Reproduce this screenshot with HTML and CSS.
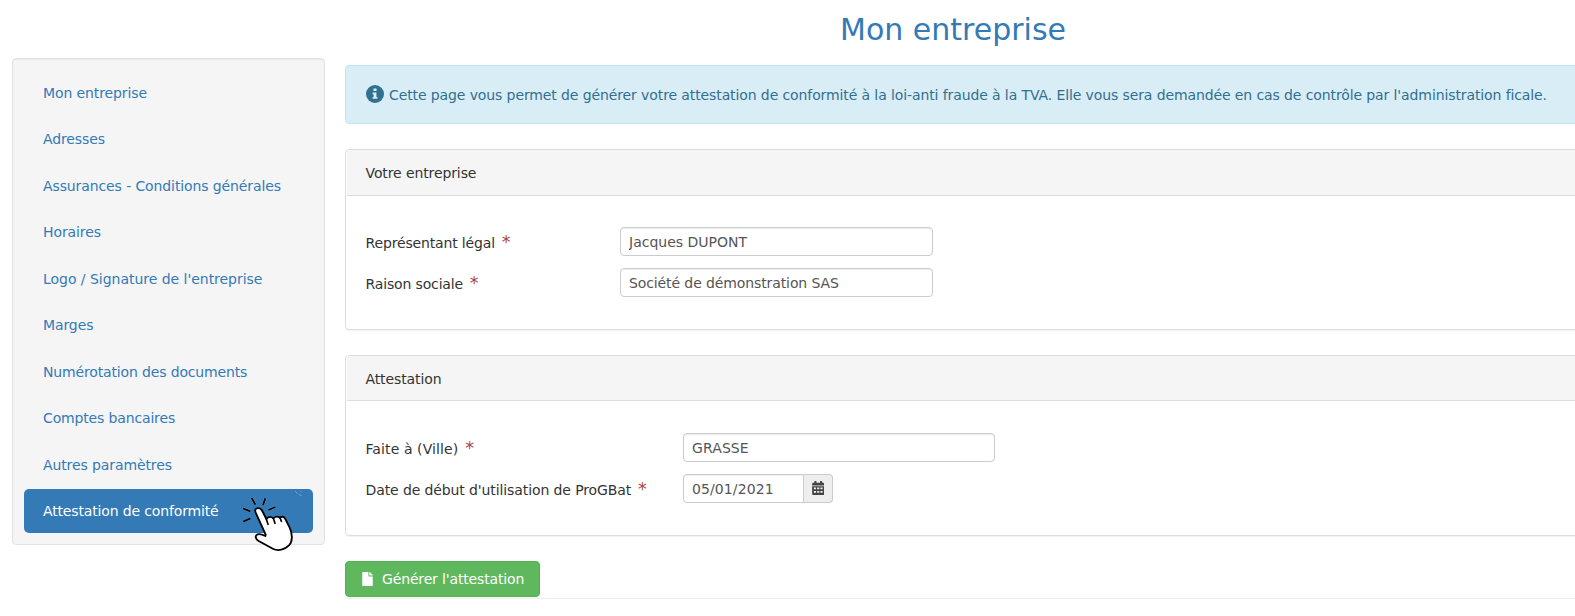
FILE: index.html
```html
<!DOCTYPE html>
<html lang="fr">
<head>
<meta charset="utf-8">
<title>Mon entreprise</title>
<link rel="stylesheet" href="styles.css">
</head>
<body>
<div class="page">
  <aside class="sidebar">
    <ul class="nav">
      <li><a class="nav-link">Mon entreprise</a></li>
      <li><a class="nav-link">Adresses</a></li>
      <li><a class="nav-link">Assurances - Conditions générales</a></li>
      <li><a class="nav-link">Horaires</a></li>
      <li><a class="nav-link loose">Logo / Signature de l'entreprise</a></li>
      <li><a class="nav-link">Marges</a></li>
      <li><a class="nav-link tight">Numérotation des documents</a></li>
      <li><a class="nav-link tight">Comptes bancaires</a></li>
      <li><a class="nav-link">Autres paramètres</a></li>
      <li><a class="nav-link tight active">Attestation de conformité</a></li>
    </ul>
    <svg class="pointer" viewBox="0 0 300 240">
      <g fill="none" stroke="#fff" stroke-opacity=".45" stroke-width="2" stroke-linecap="round"><path d="M196 34l6 6M207 44l7 2M213 35h1"/></g>
      <g fill="none" stroke="#fff" stroke-opacity=".3" stroke-width="8"><path d="M65 54L76 74M106 55L99 75M39 85L61 94M115 90L136 81M40 125L61 115"/></g>
      <g fill="none" stroke="#000" stroke-width="5.500" stroke-linecap="butt"><path d="M65 54L76 74M106 55L99 75M39 85L61 94M115 90L136 81M40 125L61 115"/></g>
      <path d="M77 98C73 89 78 85 84 84.500C91 84 94 87 97 93L109 117C115 110 123 109 130 115C138 108 145 109 150 113C158 107 163 111 167 119L179 143C189 164 187 187 177 196C164 209 145 214 130 207L86 183C76 177 74 166 83 163C91 161 96 163 106 168L107 164Z" fill="#fff" stroke="#000" stroke-width="5.500" stroke-linejoin="round"/>
      <path d="M109 117L114 133M130 115L135 130M150 113L154 124" fill="none" stroke="#000" stroke-width="5" stroke-linecap="round"/>
    </svg>
  </aside>
  <main class="content">
    <h1 class="title">Mon entreprise</h1>
    <div class="section">
      <div class="alert">
        <svg class="info" viewBox="0 0 18 18"><circle cx="9" cy="9" r="9" fill="#31708f"/><path d="M7.500 3.500h3v2.600h-3zM6.600 7.500h3.800v4.500h1v1.800H6.600V12h1V9.200h-1z" fill="#d9edf7"/></svg>
        <span>Cette page vous permet de générer votre attestation de conformité à la loi-anti fraude à la TVA. Elle vous sera demandée en cas de contrôle par l'administration ficale.</span>
      </div>
      <section class="panel">
        <header class="panel-heading">Votre entreprise</header>
        <div class="panel-body company">
          <label class="tight">Représentant légal <span class="required">*</span></label>
          <input class="field even" type="text" value="Jacques DUPONT">
          <label class="tight">Raison sociale <span class="required">*</span></label>
          <input class="field" type="text" value="Société de démonstration SAS">
        </div>
      </section>
      <section class="panel">
        <header class="panel-heading short">Attestation</header>
        <div class="panel-body certificate">
          <label class="wide">Faite à (Ville) <span class="required">*</span></label>
          <input class="field wide" type="text" value="GRASSE">
          <label>Date de début d'utilisation de ProGBat <span class="required">*</span></label>
          <div class="date-group">
            <input class="field date wide" type="text" value="05/01/2021">
            <span class="addon"><svg class="calendar" viewBox="0 0 448 512"><path fill="#444" fill-rule="evenodd" d="M96 0h48a16 16 0 0 1 16 16v48h128V16a16 16 0 0 1 16-16h48a16 16 0 0 1 16 16v48h32a48 48 0 0 1 48 48v48H0v-48a48 48 0 0 1 48-48h32V16A16 16 0 0 1 96 0zM0 192h448v272a48 48 0 0 1-48 48H48a48 48 0 0 1-48-48zM64 240v64h80v-64zM184 240v64h80v-64zM304 240v64h80v-64zM64 368v64h80v-64zM184 368v64h80v-64zM304 368v64h80v-64z"/></svg></span>
          </div>
        </div>
      </section>
      <button class="submit tight" type="button">
        <svg class="file" viewBox="0 0 384 512"><path fill="#fff" d="M224 136V0H24A24 24 0 0 0 0 24v464a24 24 0 0 0 24 24h336a24 24 0 0 0 24-24V160H248a24 24 0 0 1-24-24zM384 122v6H256V0h6a24 24 0 0 1 17 7l98 98a24 24 0 0 1 7 17z"/></svg>
        <span>Générer l'attestation</span>
      </button>
    </div>
  </main>
</div>
</body>
</html>
```

FILE: styles.css
```css
* { box-sizing: border-box; }
body {
  margin: 0;
  height: 616px;
  overflow: hidden;
  background: #fff;
  color: #333;
  font: 14px/20px "DejaVu Sans", sans-serif;
  letter-spacing: -.106px;
}
.page { display: flex; align-items: flex-start; width: 1600px; padding-left: 12px; }
.sidebar {
  position: relative;
  flex: none;
  width: 313px;
  height: 487px;
  margin-top: 58px;
  padding: 12px 11px;
  background: #f5f5f5;
  border: 1px solid #e3e3e3;
  border-radius: 4px;
  box-shadow: inset 0 1px 1px rgba(0, 0, 0, .05);
}
.nav { display: flex; flex-direction: column; gap: 2px; margin: 0; padding: 0; list-style: none; }
.nav-link {
  display: block;
  height: 44.45px;
  padding: 0 19px;
  border-radius: 5px;
  color: #337ab7;
  line-height: 44.45px;
}
.nav-link.active { background: #337ab7; color: #fff; }
.pointer { position: absolute; left: 217px; top: 421px; width: 100px; height: 80px; }
.content { flex: none; width: 1255px; padding-left: 20px; }
.title {
  width: 1216px;
  margin: 0;
  padding-top: 12px;
  height: 65px;
  color: #337ab7;
  font-size: 30px;
  font-weight: 400;
  line-height: 36px;
  letter-spacing: 0;
  text-align: center;
}
.section { height: 534px; border-bottom: 1px solid #eee; border-bottom-left-radius: 4px; }
.alert {
  display: flex;
  align-items: center;
  gap: 5px;
  height: 59px;
  padding: 0 20px;
  color: #31708f;
  background: #d9edf7;
  border: 1px solid #bce8f1;
  border-radius: 4px;
  white-space: nowrap;
}
.info { flex: none; width: 18px; height: 18px; margin-top: -1px; }
.panel {
  height: 181px;
  margin-top: 25px;
  border: 1px solid #ddd;
  border-radius: 4px;
  box-shadow: 0 1px 1px rgba(0, 0, 0, .05);
}
.panel-heading {
  height: 46px;
  margin-left: 1px;
  padding-left: 18.5px;
  line-height: 46px;
  background: #f5f5f5;
  border-bottom: 1px solid #ddd;
}
.panel-heading.short { height: 45px; margin-bottom: 1px; }
.panel-body { display: grid; grid-auto-rows: 29px; row-gap: 12px; padding: 31px 19px; }
.company { grid-template-columns: 255px 313px; }
.certificate { grid-template-columns: 318px 312px; }
.panel-body label { padding-left: .5px; line-height: 33px; white-space: nowrap; }
.required { margin-left: 2.5px; color: #a94442; font-size: 17.5px; line-height: 1; }
.field {
  width: 100%;
  height: 29px;
  padding: 0 8px;
  color: #555;
  background: #fff;
  border: 1px solid #ccc;
  border-radius: 4px;
  box-shadow: inset 0 1px 1px rgba(0, 0, 0, .075);
  font: inherit;
  letter-spacing: -.106px;
}
.date-group { display: flex; width: 150px; }
.date { width: 121px; border-radius: 4px 0 0 4px; }
.addon {
  display: flex;
  align-items: center;
  justify-content: center;
  width: 29px;
  background: #eee;
  border: 1px solid #ccc;
  border-left: 0;
  border-radius: 0 4px 4px 0;
}
.calendar { flex: none; width: 12.5px; height: 14px; margin-top: -1px; }
.submit {
  display: flex;
  align-items: center;
  gap: 9px;
  width: 195px;
  height: 36px;
  margin-top: 25px;
  padding: 0 16px;
  color: #fff;
  background: #60b85e;
  border: 1px solid #54b152;
  border-radius: 4px;
  font: inherit;
  white-space: nowrap;
}
.file { flex: none; width: 11px; height: 14px; margin-top: -1px; }
.tight { letter-spacing: -.15px; }
.loose { letter-spacing: -.03px; }
.even { letter-spacing: 0; }
.wide { letter-spacing: .1px; }
```
